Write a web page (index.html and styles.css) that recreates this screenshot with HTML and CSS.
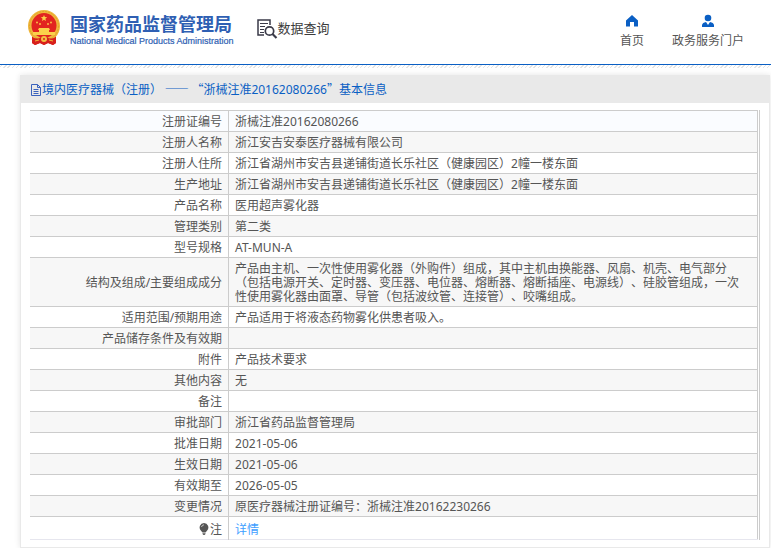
FILE: index.html
```html
<!DOCTYPE html>
<html lang="zh-CN">
<head>
<meta charset="utf-8">
<title>国家药品监督管理局 数据查询</title>
<link rel="stylesheet" href="styles.css">
</head>
<body>
<header class="top">
  <div class="brand">
    <svg class="emblem" viewBox="0 0 34 36" aria-hidden="true">
      <path d="M5 24H29V33L26 35L21 33L17 35L13 33L8 35L5 33Z" fill="#d8201c"/>
      <circle cx="17" cy="16" r="16" fill="#f0b73c"/>
      <circle cx="17" cy="16" r="14.500" fill="none" stroke="#dfa32c" stroke-dasharray="2 1"/>
      <circle cx="17" cy="15.500" r="12.500" fill="#e22420"/>
      <path d="M17 5l.9 2.100 2.300.1-1.800 1.500.6 2.300-2-1.300-2 1.300.6-2.300-1.800-1.500 2.300-.1z" fill="#fbd14b"/>
      <g fill="#f9bd45"><circle cx="10" cy="12.500" r="1"/><circle cx="13" cy="14" r="1"/><circle cx="21" cy="14" r="1"/><circle cx="24" cy="12.500" r="1"/></g>
      <path d="M12 18h10l1 2h-1v2h6v3H6v-3h6v-2h-1z" fill="#fbd14b"/>
      <path d="M5 27q6 3 9 0h6q3 3 9 0v6l-3 2-5-2-4 2-4-2-5 2-3-2z" fill="#d8201c"/>
      <circle cx="17" cy="29" r="3" fill="#f4c044"/><circle cx="17" cy="29" r="1" fill="#d8201c"/>
      <path d="M8 31l4-1M26 31l-4-1" stroke="#f0b73c" fill="none"/>
    </svg>
    <div class="names">
      <div class="name-cn">国家药品监督管理局</div>
      <div class="name-en">National Medical Products Administration</div>
    </div>
  </div>
  <div class="section">
    <svg class="search-icon" viewBox="0 0 21 20" fill="none" stroke="#3a3a48" aria-hidden="true">
      <path d="M7 16H1V1h12v5" stroke-width="1.500"/>
      <path d="M3 4.500h8M3 7.500h5M3 10.500h4M3 13.500h4" stroke-width="1"/>
      <circle cx="12.500" cy="12" r="4.200" stroke-width="1.700"/>
      <path d="M15.500 15l4 4" stroke-width="2.200"/>
    </svg>
    <span>数据查询</span>
  </div>
  <nav class="links">
    <a href="#home"><svg viewBox="0 0 14 14" aria-hidden="true"><path d="M7 1L1 6.500V12.500H5V8H9V12.500H13V6.500Z" fill="#0a5fc4"/></svg>首页</a>
    <a href="#portal"><svg viewBox="0 0 14 14" aria-hidden="true"><circle cx="7" cy="4" r="3.300" fill="#0a5fc4"/><path d="M1 13V11Q1.500 8.500 5 8l2 3 2-3q3.500.5 4 3v2z" fill="#0a5fc4"/></svg>政务服务门户</a>
  </nav>
</header>
<main class="panel">
  <h1 class="title"><svg viewBox="0 0 12 12" fill="none" stroke="#3a62bd" aria-hidden="true"><path d="M1.500.5h6l3 3v8h-9zM7.500.5v3h3M3.500 5.500h5M3.500 7.500h5M3.500 9.500h5"/></svg><span>境内医疗器械（注册） —— “浙械注准<span class="num">20162080266</span>”基本信息</span></h1>
  <div class="frame">
    <table class="info">
      <tbody>
        <tr class="first"><th scope="row">注册证编号</th><td>浙械注准20162080266</td></tr>
        <tr><th scope="row">注册人名称</th><td>浙江安吉安泰医疗器械有限公司</td></tr>
        <tr><th scope="row">注册人住所</th><td>浙江省湖州市安吉县递铺街道长乐社区（健康园区）2幢一楼东面</td></tr>
        <tr><th scope="row">生产地址</th><td>浙江省湖州市安吉县递铺街道长乐社区（健康园区）2幢一楼东面</td></tr>
        <tr><th scope="row">产品名称</th><td>医用超声雾化器</td></tr>
        <tr><th scope="row">管理类别</th><td>第二类</td></tr>
        <tr><th scope="row">型号规格</th><td>AT-MUN-A</td></tr>
        <tr><th scope="row">结构及组成/主要组成成分</th><td>产品由主机、一次性使用雾化器（外购件）组成，其中主机由换能器、风扇、机壳、电气部分（包括电源开关、定时器、变压器、电位器、熔断器、熔断插座、电源线）、硅胶管组成，一次性使用雾化器由面罩、导管（包括波纹管、连接管）、咬嘴组成。</td></tr>
        <tr><th scope="row">适用范围/预期用途</th><td>产品适用于将液态药物雾化供患者吸入。</td></tr>
        <tr><th scope="row">产品储存条件及有效期</th><td></td></tr>
        <tr><th scope="row">附件</th><td>产品技术要求</td></tr>
        <tr><th scope="row">其他内容</th><td>无</td></tr>
        <tr><th scope="row">备注</th><td></td></tr>
        <tr><th scope="row">审批部门</th><td>浙江省药品监督管理局</td></tr>
        <tr><th scope="row">批准日期</th><td>2021-05-06</td></tr>
        <tr><th scope="row">生效日期</th><td>2021-05-06</td></tr>
        <tr><th scope="row">有效期至</th><td>2026-05-05</td></tr>
        <tr><th scope="row">变更情况</th><td>原医疗器械注册证编号：浙械注准20162230266</td></tr>
        <tr class="note"><th scope="row"><svg viewBox="0 0 10 12" aria-hidden="true"><path d="M5 0a4.500 4.500 0 0 1 3 7.700L6.500 9.500h-3L2 7.700A4.500 4.500 0 0 1 5 0zM3.500 10.300h3v.7L5.500 12h-1l-1-1z" fill="#555"/><path d="M2.500 4Q3 2 5 1.800" fill="none" stroke="#ddd" stroke-width=".8"/></svg>注</th><td><a href="#detail">详情</a></td></tr>
      </tbody>
    </table>
  </div>
</main>
</body>
</html>
```

FILE: styles.css
```css
* { box-sizing: border-box; }

body {
  margin: 0;
  background: #fff;
  color: #555;
  font: 12px/14px "Noto Sans", "Noto Sans CJK SC", sans-serif;
  text-spacing-trim: space-all;
}

a { color: #409eff; text-decoration: none; }

.top {
  position: relative;
  display: flex;
  align-items: flex-start;
  height: 65px;
  padding: 10px 27px 0;
  border-bottom: 1px solid #0a5fc4;
}

.top::after {
  content: "";
  position: absolute;
  top: calc(100% + 1px);
  left: 0;
  right: 0;
  height: 3px;
  background: repeating-linear-gradient(135deg, #fff 0 1px, #e4e4e4 1px 2px, #fff 2px 3px);
}

.brand { display: flex; gap: 9px; }
.emblem { width: 34px; height: 36px; }
.names { color: #2f5fb3; white-space: nowrap; }
.name-cn { font: bold 18px/26px "Noto Sans CJK SC", sans-serif; }
.name-en { font: 9px/10px "Liberation Sans", sans-serif; -webkit-text-stroke: 0.2px #2f5fb3; }

.section {
  display: flex;
  margin: 9px 0 0 23px;
  color: #3c3c3c;
  font: 13px/18px "Noto Sans CJK SC", sans-serif;
  white-space: nowrap;
}
.search-icon { width: 21px; height: 20px; }

.links { display: flex; gap: 28px; margin: 4px 0 0 auto; }
.links a {
  display: flex;
  flex-direction: column;
  align-items: center;
  gap: 6px;
  color: #555;
  white-space: nowrap;
}
.links svg { width: 14px; height: 14px; }

.panel {
  margin: 10px 1px 0 20px;
  padding-bottom: 7px;
  border: 1px solid #e9e9e9;
  background: #fff;
  box-shadow: 0 0 6px #e4e4e4;
}

.title {
  display: flex;
  align-items: center;
  height: 27px;
  margin: 0;
  padding-left: 9px;
  background: #e9e9e9;
  color: #0a5fc4;
  font: 12px/14px "Noto Sans CJK SC", sans-serif;
}
.title svg { width: 12px; height: 12px; }
.num { font-family: "Noto Sans", sans-serif; }

.frame {
  margin: 7px 9px 0;
  border-right: 1px solid #ccc;
  padding-right: 1px;
}

.info {
  width: 100%;
  border-collapse: collapse;
  border-right: 1px solid #ccc;
  border-bottom: 1px solid #e6e6ee;
}
.info th,
.info td {
  height: 21px;
  padding: 4px 9px 2px 6px;
  border-top: 1px solid #ccc;
  font-weight: normal;
  text-align: left;
}
.info th {
  width: 27.3%;
  padding: 4px 6px 2px;
  border-right: 1px solid #ccc;
  text-align: right;
}
.info tr:nth-child(even) { background: #f7f7f7; }
.info .first { background: #fafcff; }
.info .note th,
.info .note td { height: 23px; padding-top: 6px; }
.note svg { width: 10px; height: 12px; margin-right: 1px; vertical-align: -1px; }
```
